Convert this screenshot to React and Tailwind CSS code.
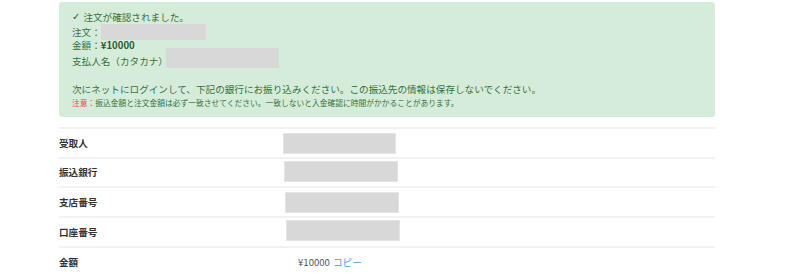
import React from 'react';

const rows = [
  { label: '受取人', box: 'ml-[224px] mt-[2px] w-[113px]' },
  { label: '振込銀行', box: 'ml-[225px] -mt-[3px] w-[114px]' },
  { label: '支店番号', box: 'ml-[226px] w-[114px]' },
  { label: '口座番号', box: 'ml-[227px] -mt-[2px] w-[114px]' },
];

function Redacted({ className }) {
  return <span className={`inline-block bg-[#d8d8d8] border border-[#e4e4e4] ${className}`} />;
}

export default function App() {
  return (
    <div className="w-[800px] h-[279px] bg-white overflow-hidden font-['Noto_Sans_CJK_JP','Noto_Sans',sans-serif]">
      <div className="ml-[59px] w-[656px] pt-[2px]">
        {/* success alert */}
        <div className="bg-[#d5ecdb] rounded-[3px] pl-[13px] pt-[8px] pb-[7px] text-[9.6px] text-[#37703a]">
          <div className="h-[14px] leading-[14px] flex items-center">
            <span className="font-['DejaVu_Sans',sans-serif] font-bold text-[10px] mr-[3px] text-[#2d5a2e]">✓</span>
            <span>注文が確認されました。</span>
          </div>
          <div className="h-[14px] flex items-start">
            <span className="leading-[14px] mt-[1px]">注文：</span>
            <Redacted className="h-[16px] w-[105px] border-0" />
          </div>
          <div className="h-[14px] leading-[14px]">
            金額：<span className="font-bold text-[#2d5a2e]">¥10000</span>
          </div>
          <div className="h-[16px] flex items-end">
            <span className="leading-[14px]">支払人名（カタカナ）</span>
            <Redacted className="h-[20px] w-[113px] -ml-[2px] border-0" />
          </div>
          <div className="h-[14px] leading-[14px] mt-[14px]">
            次にネットにログインして、下記の銀行にお振り込みください。この振込先の情報は保存しないでください。
          </div>
          <div className="h-[14px] leading-[14px] text-[7.75px]">
            <span className="text-[#d9534f]">注意：</span>
            振込金額と注文金額は必ず一致させてください。一致しないと入金確認に時間がかかることがあります。
          </div>
        </div>

        {/* bank details */}
        <div className="mt-[10px] text-[9.6px]">
          {rows.map((r) => (
            <div key={r.label} className="relative h-[29.7px] border-t-2 border-[#f1f2f2] flex items-center">
              <span className="absolute left-0 font-bold text-[#333]">{r.label}</span>
              <Redacted className={`h-[21px] ${r.box}`} />
            </div>
          ))}
          <div className="h-[30px] border-t-2 border-[#f1f2f2] flex items-center">
            <span className="w-[239px] font-bold text-[#333]">金額</span>
            <span className="text-[#555]">¥10000</span>
            <span className="ml-[3px] text-[#3d9bf0]">コピー</span>
          </div>
        </div>
      </div>
    </div>
  );
}
